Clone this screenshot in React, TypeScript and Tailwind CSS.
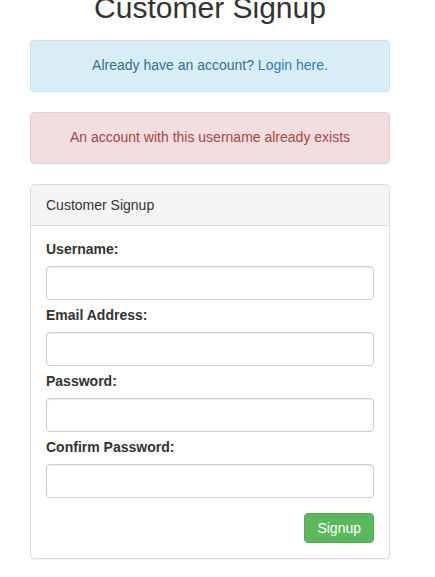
import React from "react";

const fields = [
  { id: "username", label: "Username:", type: "text" },
  { id: "email", label: "Email Address:", type: "email" },
  { id: "password", label: "Password:", type: "password" },
  { id: "confirm", label: "Confirm Password:", type: "password" },
];

export default function App() {
  return (
    <div
      className="min-h-[577px] w-[435px] overflow-hidden bg-white text-[14px] text-[#333]"
      style={{ fontFamily: '"Liberation Sans", Arial, sans-serif' }}
    >
      <div className="ml-[30px] w-[360px]">
        {/* Title */}
        <h2 className="-mt-[9px] mb-[16px] text-center text-[30px] leading-[33px] font-normal text-[#333]">
          Customer Signup
        </h2>

        {/* Info alert */}
        <div className="mb-[20px] rounded-[4px] border border-[#bce8f1] bg-[#d9edf7] px-[15px] pt-[14px] pb-[16px] text-center leading-[20px] text-[#31708f]">
          Already have an account? <a className="text-[#337ab7]">Login here.</a>
        </div>

        {/* Error alert */}
        <div className="mb-[20px] rounded-[4px] border border-[#ebccd1] bg-[#f2dede] px-[15px] pt-[14px] pb-[16px] text-center leading-[20px] text-[#a94442]">
          An account with this username already exists
        </div>

        {/* Panel */}
        <div className="rounded-[4px] border border-[#ddd] bg-white shadow-[0_1px_1px_rgba(0,0,0,0.05)]">
          <div className="rounded-t-[3px] border-b border-[#ddd] bg-[#f5f5f5] px-[15px] py-[10px] leading-[20px]">
            Customer Signup
          </div>
          <form className="px-[15px] pt-[13px] pb-[15px]">
            {fields.map((f) => (
              <div key={f.id} className="mb-[5px]">
                <label
                  htmlFor={f.id}
                  className="mb-[7px] block leading-[20px] font-bold"
                >
                  {f.label}
                </label>
                <input
                  id={f.id}
                  type={f.type}
                  className="block h-[34px] w-full rounded-[4px] border border-[#ccc] bg-white px-[12px] shadow-[inset_0_1px_1px_rgba(0,0,0,0.075)] outline-none"
                />
              </div>
            ))}
            <div className="mt-[15px] flex justify-end">
              <button
                type="button"
                className="h-[30px] rounded-[4px] border border-[#4cae4c] bg-[#5cb85c] px-[12px] leading-[20px] text-white"
              >
                Signup
              </button>
            </div>
          </form>
        </div>
      </div>
    </div>
  );
}
